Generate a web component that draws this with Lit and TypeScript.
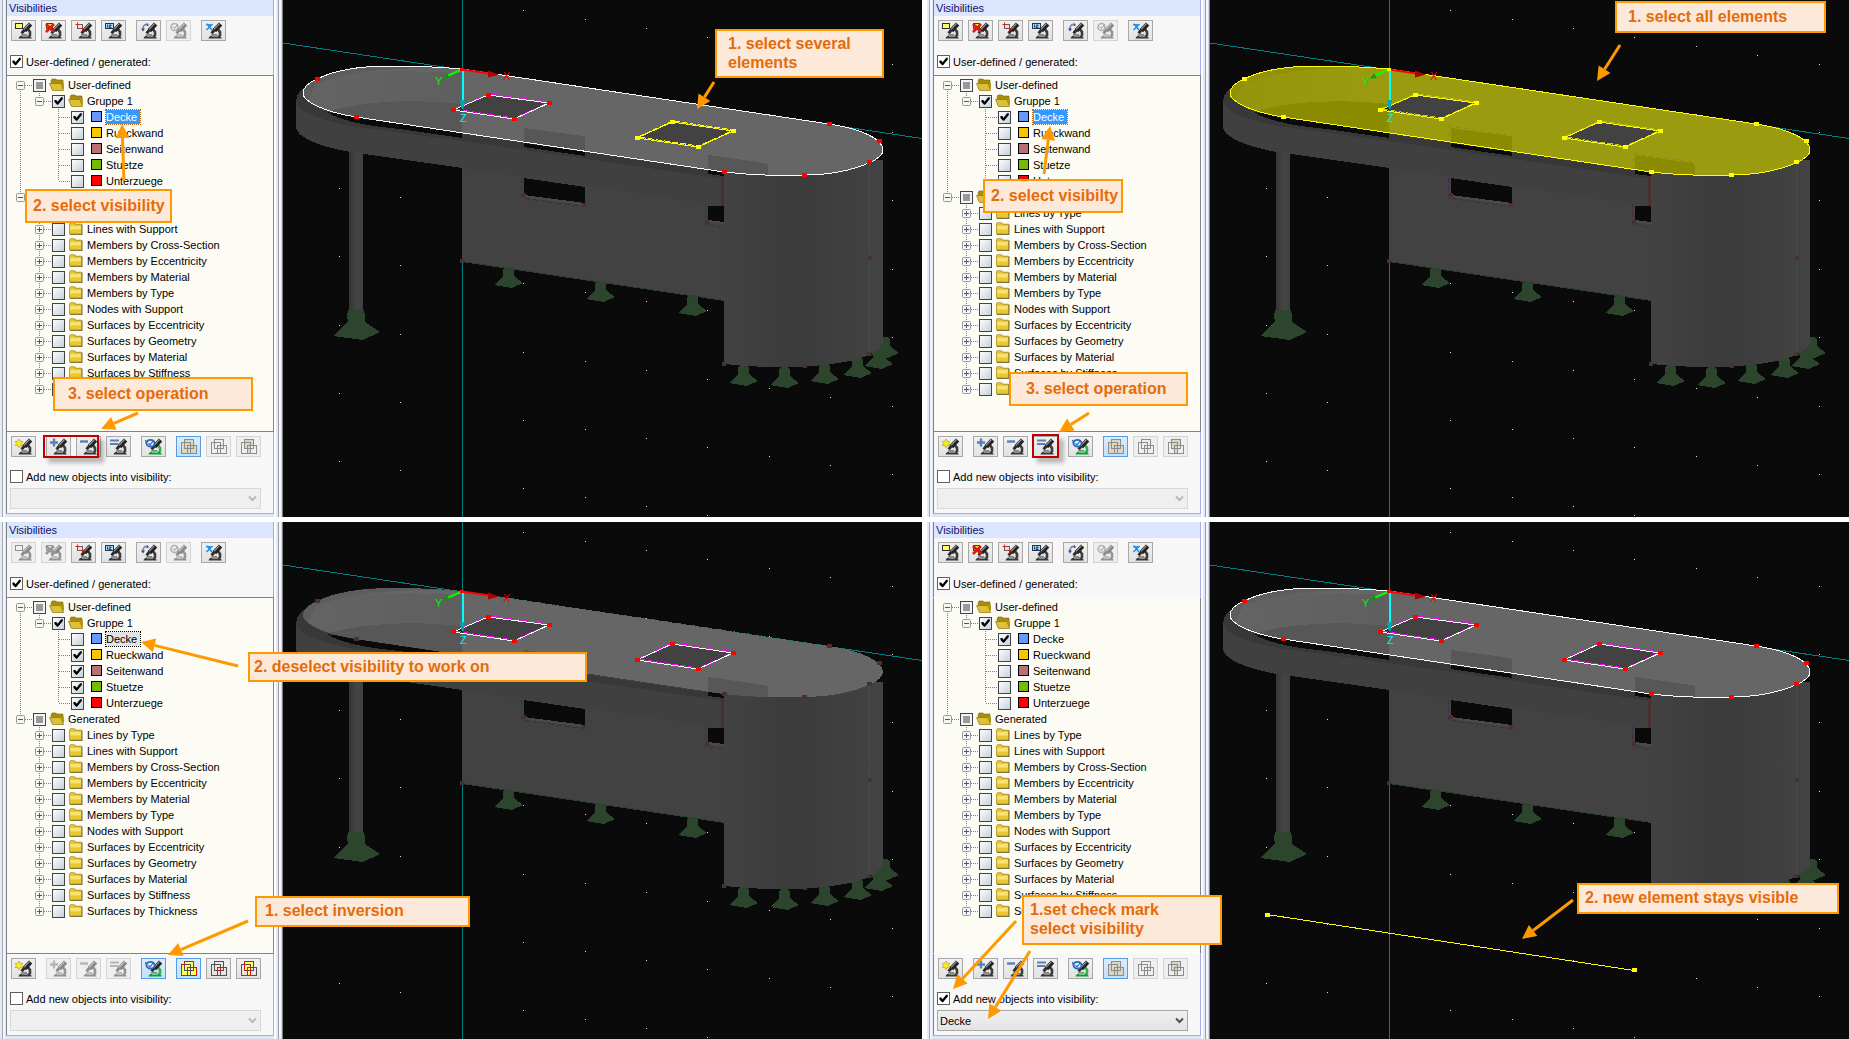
import { LitElement, html, svg, css, nothing } from "lit";
import { customElement, property } from "lit/decorators.js";
import { classMap } from "lit/directives/class-map.js";

type IconName =
  | "rect" | "delete" | "crop" | "number" | "undo" | "check" | "cross"
  | "star" | "plus" | "minus" | "equal" | "invert"
  | "union" | "intersect" | "partial";

type Tool = { icon: IconName; off?: boolean; active?: boolean };
type Callout = { x: number; y: number; w: number; h: number; pad: number; lines: string[] };
type Arrow = [number, number, number, number];
type Frame = { x: number; y: number; w: number; h: number };

interface Pane {
  top: Tool[][];
  bottom: Tool[][];
  checked: string[];
  focus?: "selected" | "outlined";
  openTree?: boolean;
  addNew?: boolean;
  target: string;
  look: "partial" | "all" | "hidden" | "line";
  callouts: Callout[];
  arrows: Arrow[];
  frame?: Frame;
}

const TITLES: Record<IconName, string> = {
  rect: "Select", delete: "Delete", crop: "Window", number: "Numbers", undo: "Undo",
  check: "Apply", cross: "Cancel", star: "New", plus: "Add", minus: "Subtract",
  equal: "Set", invert: "Invert", union: "Union", intersect: "Intersection", partial: "Difference",
};

const LAYERS: [string, string][] = [
  ["Decke", "#6699ff"],
  ["Rueckwand", "#f7c600"],
  ["Seitenwand", "#b87070"],
  ["Stuetze", "#76b900"],
  ["Unterzuege", "#ff0000"],
];

const GENERATED = [
  "Lines by Type", "Lines with Support", "Members by Cross-Section",
  "Members by Eccentricity", "Members by Material", "Members by Type",
  "Nodes with Support", "Surfaces by Eccentricity", "Surfaces by Geometry",
  "Surfaces by Material", "Surfaces by Stiffness", "Surfaces by Thickness",
];

const microscope = (green: boolean) => svg`
  <path d="M15.5 7.5l2.5 3.5v4" fill="none" stroke=${green ? "#28b848" : "#3c3c3c"} stroke-width="2.6" />
  <path d="M18.6 3L12.4 9.6" stroke="#242424" stroke-width="4.6" />
  <path d="M17.4 2.6L11.6 8.8" stroke="#a0a0a0" stroke-width="1.1" />
  <path d="M12.6 8.6L9.6 12.4" stroke="#2c2c2c" stroke-width="3" />
  <path d="M9 13.5h6" stroke="#8a8a8a" stroke-width="1.2" />
  <path d="M6.5 17.4c.5-2 2-2.8 4-3h6c1.800.2 2.800 1.200 3.200 3z" fill=${green ? "#129a34" : "#383838"} />
  <path d="M10 15.5h6" stroke=${green ? "#60d880" : "#8c8c8c"} stroke-width="1" />
`;

const badge = (name: IconName) => {
  switch (name) {
    case "rect":
      return svg`<rect x="3.5" y="2.5" width="7" height="5" fill="#ffff66" stroke="#303030" />`;
    case "delete":
      return svg`<rect x="4.5" y="2.5" width="6" height="5" fill="#ffe800" stroke="#504000" />
        <path d="M4 3l8 8M12 3l-8 8" stroke="#e01818" stroke-width="2.6" />`;
    case "crop":
      return svg`<rect x="5.5" y="3.5" width="5" height="4" fill="#e8e0e0" stroke="#606060" />
        <path d="M3.5 3.5h4M5.500 1.500v4M8.500 7.500h4M10.500 5.500v4" stroke="#e02020" />`;
    case "number":
      return svg`<rect x="3.5" y="2.5" width="8" height="5" fill="#a8dcff" stroke="#203858" />
        <path d="M5.5 3.5v3M7 4h2v1h-2v1.500h2.500" fill="none" stroke="#102840" stroke-width=".8" />`;
    case "undo":
      return svg`<path d="M6 8.500c-.5-3.500 1.500-5.500 5-5" fill="none" stroke="#6888b8" stroke-width="1.6" />
        <path d="M4 7.500l2 3 2-3zM10.500 2l1.500 2.500-2.500.5z" fill="#384c6c" />`;
    case "check":
      return svg`<circle cx="7.5" cy="6" r="3.500" fill="#f0f0f0" stroke="#5078b0" stroke-width="1.6" />
        <path d="M6 5.500l1.500 2 3-4" fill="none" stroke="#404040" />`;
    case "cross":
      return svg`<path d="M5 3l5 6M10.500 3l-6 6M4 3.500l5 .5" stroke="#2090e8" stroke-width="1.6" />`;
    case "star":
      return svg`<path d="M7 2l1.200 2.200 2.600.2-1.300 2 1.300 2.200-2.600-.1L7 10.800l-1.200-2.300-2.600.1 1.200-2.200-1.200-2 2.600-.2z" fill="#f8ec20" stroke="#a89a10" stroke-width=".6" />`;
    case "plus":
      return svg`<path d="M3 5.500h8M7 1.500v8" stroke="#5a80b8" stroke-width="2.4" />`;
    case "minus":
      return svg`<path d="M3 4.500h8" stroke="#5a80b8" stroke-width="2.4" />`;
    case "equal":
      return svg`<path d="M3 3.500h9M3 7h8" stroke="#5a80b8" stroke-width="2" />`;
    case "invert":
      return svg`<ellipse cx="8.5" cy="6.2" rx="4" ry="3.400" fill="#e4f0ff" stroke="#2c68b8" stroke-width="1.8" />
        <path d="M3.5 3l1.500 5M6.500 6.500l1.500 1.500 3-4" fill="none" stroke="#2c68b8" stroke-width="1.2" />`;
    default:
      return nothing;
  }
};

const squares = (name: IconName, live: boolean) => {
  const g = live ? "#505050" : "#8c8c8c";
  const r = live ? "#e01010" : "#8c8c8c";
  const y = live ? "#ffff60" : "#d8d6c4";
  return svg`
    ${name === "union" ? svg`<path d="M7.5 2.5h9v6h3v8h-15v-11h3z" fill=${y} />` : nothing}
    ${name === "partial" ? svg`<path d="M7.5 2.5h9v6h-3v8h-3v-5h-3z" fill=${y} />` : nothing}
    <rect x="7.5" y="2.5" width="9" height="9" fill="none" stroke=${g} />
    <rect x="4.5" y="5.5" width="9" height="11" fill="none" stroke=${g} />
    <rect x="10.5" y="8.5" width="9" height="8" fill="none" stroke=${g} />
    ${name === "union" ? svg`<path d="M7.5 2.5h9v6h3v8h-15v-11h3z" fill="none" stroke=${r} />` : nothing}
    ${name === "intersect" ? svg`<rect x="10.5" y="8.5" width="3" height="3" fill="none" stroke=${r} />` : nothing}
    ${name === "partial" ? svg`<path d="M7.5 2.5h9v6h-3v8h-3v-5h-3z" fill="none" stroke=${r} />` : nothing}
  `;
};

@customElement("tool-button")
class ToolButton extends LitElement {
  @property({ attribute: false }) tool!: Tool;

  static styles = css`
    :host { display: block; }
    button {
      display: block; width: 25px; height: 21px; padding: 0;
      border: 1px solid #a8a8a8; background: linear-gradient(#f0f0f0, #e2e2e2);
    }
    svg { display: block; width: 23px; height: 19px; }
    button:disabled { border-color: #d4d4d4; background: #efefef; }
    .mono svg { filter: grayscale(1); opacity: 0.5; }
    button.active, button.active:disabled {
      border-color: #569de5; background: linear-gradient(#daecfc, #c4e0fc);
    }
  `;

  render() {
    const { icon, off, active } = this.tool;
    const sets = icon === "union" || icon === "intersect" || icon === "partial";
    return html`<button
      class=${classMap({ active: !!active, mono: !!off && !sets })}
      ?disabled=${off}
      aria-label=${TITLES[icon]}
    >
      <svg viewBox="0 0 23 19">
        ${sets ? squares(icon, !off) : svg`${microscope(icon === "invert")}${badge(icon)}`}
      </svg>
    </button>`;
  }
}

type Guide = { up?: boolean; down?: boolean; across?: boolean; sign?: "+" | "-" };

@customElement("visibility-tree")
class VisibilityTree extends LitElement {
  @property({ attribute: false }) checked: string[] = [];
  @property() focused = "";

  static styles = css`
    :host { display: block; padding: 1px 0 0 4px; }
    ul { list-style: none; margin: 0; padding: 0 0 34px; }
    li { display: flex; align-items: center; height: 16px; }
    .guide, .toggle { flex: none; width: 19px; height: 16px; padding: 0; border: 0; background: none; }
    .guide, .guide-art { display: block; overflow: visible; }
    .guide-art { width: 19px; height: 16px; }
    label { display: flex; align-items: center; gap: 3px; margin-left: 3px; }
    input {
      appearance: none; flex: none; display: grid; place-items: center;
      width: 13px; height: 13px; margin: 0; border: 1px solid #404448;
      background: linear-gradient(135deg, #fdfdfd, #c6d0dc);
    }
    input:checked::after {
      content: ""; width: 9px; height: 9px; background: #000;
      clip-path: polygon(5% 38%, 25% 38%, 40% 58%, 80% 8%, 98% 8%, 98% 28%, 45% 92%, 35% 92%, 5% 60%);
    }
    input:indeterminate { background: #f4f4f4; }
    input:indeterminate::after { content: ""; width: 7px; height: 7px; background: #999; }
    .folder { flex: none; width: 16px; height: 14px; }
    .swatch {
      box-sizing: border-box; flex: none; width: 16px; height: 16px;
      padding: 2px 1px 3px 4px; background: #fff;
    }
    .color { display: block; box-sizing: border-box; width: 11px; height: 11px; border: 1px solid #000; }
    .name { white-space: nowrap; line-height: 14px; }
    .selected { background: #3399ff; color: #fff; outline: 1px dotted #c86400; padding-right: 3px; }
    .outlined { background: #e4e4e4; outline: 1px dotted #000; padding-right: 3px; }
  `;

  private guide(g: Guide) {
    const art = svg`
      ${g.up ? svg`<path d="M9.5 0v8" stroke="#808080" stroke-dasharray="1 1" />` : nothing}
      ${g.down ? svg`<path d="M9.5 8v8" stroke="#808080" stroke-dasharray="1 1" />` : nothing}
      ${g.across ? svg`<path d="M10 8.500h11" stroke="#808080" stroke-dasharray="1 1" />` : nothing}
      ${g.sign
        ? svg`<rect x="5.5" y="4.5" width="8" height="8" rx="1" fill="#f6f6f2" stroke="#989898" />
            <path d=${g.sign === "+" ? "M7 8.5h5M9.5 6v5" : "M7 8.5h5"} stroke="#3858a8" />`
        : nothing}`;
    return g.sign
      ? html`<button class="toggle" aria-label=${g.sign === "+" ? "Expand" : "Collapse"}>
          <svg class="guide-art" viewBox="0 0 19 16">${art}</svg>
        </button>`
      : html`<svg class="guide" viewBox="0 0 19 16">${art}</svg>`;
  }

  private folder(open: boolean) {
    return open
      ? html`<svg class="folder" viewBox="0 0 16 14">
          <path d="M2 3l1-2h4l1 1h6v9H3z" fill="#a88c10" stroke="#7c680c" stroke-width=".6" />
          <path d="M.5 5.5h11.500l2.500 7H3.500z" fill="#dcc038" stroke="#8c7410" stroke-width=".7" />
          <path d="M12 5.500l3-1v7.500z" fill="#b89818" />
        </svg>`
      : html`<svg class="folder" viewBox="0 0 16 14">
          <path d="M2 2.500l1-1.500h4l1 1.500h6.500v10.500H2z" fill="#6f6a50" />
          <path d="M1.500 2l.8-1.300h4.200l1 1.500h6v9.800h-12z" fill="#e8c830" stroke="#a08818" stroke-width=".7" />
          <path d="M2.200 4h10.600v3.500H2.200z" fill="#f6e470" />
        </svg>`;
  }

  private row(guides: Guide[], name: string, art: unknown, state: "on" | "off" | "mixed", mark = "") {
    return html`<li>
      ${guides.map((g) => this.guide(g))}
      <label>
        <input type="checkbox" .checked=${state === "on"} .indeterminate=${state === "mixed"} />
        ${art}
        <span class="name ${mark}">${name}</span>
      </label>
    </li>`;
  }

  render() {
    const last = LAYERS.length - 1;
    return html`<ul>
      ${this.row([{ down: true, across: true, sign: "-" }], "User-defined", this.folder(true), "mixed")}
      ${this.row([{ up: true, down: true }, { up: true, across: true, sign: "-" }], "Gruppe 1", this.folder(true), "on")}
      ${LAYERS.map(([name, color], i) =>
        this.row(
          [{ up: true, down: true }, {}, { up: true, down: i < last, across: true }],
          name,
          html`<span class="swatch"><span class="color" style="background:${color}"></span></span>`,
          this.checked.includes(name) ? "on" : "off",
          name === "Decke" ? this.focused : ""
        )
      )}
      ${this.row([{ up: true, across: true, sign: "-" }], "Generated", this.folder(true), "mixed")}
      ${GENERATED.map((name, i) =>
        this.row(
          [{}, { up: true, down: i < GENERATED.length - 1, across: true, sign: "+" }],
          name, this.folder(false), "off"
        )
      )}
    </ul>`;
  }
}

const SLAB =
  "M356 117C325 112 303 102 303 93C303 88 308 83 317 79C335 70 362 66 390 66C420 66 440 67 462 69" +
  "L829 124C862 129 883 139 883 150C883 155 878 159 869 163C850 171 830 175 804 175C775 176 750 175 724 172Z";
const NODES = [[317, 79], [356, 117], [829, 124], [879, 141], [869, 162], [804, 175], [724, 172]];
const HOLES = [
  [[453, 110], [488, 95], [549, 103], [514, 119]],
  [[637, 138], [672, 122], [733, 131], [698, 147]],
];
const FEET = [[0, 0], [92, 14], [184, 28], [376, 70], [370, 81], [349, 90], [316, 96], [235, 98], [276, 100]];
const DIM_NODES = [[462, 261], [724, 364], [805, 366], [869, 354], [870, 258], [524, 195], [584, 205], [707, 222]];

@customElement("model-view")
class ModelView extends LitElement {
  @property() look: Pane["look"] = "partial";

  static styles = css`
    :host { display: block; background: #0a0a0a; overflow: hidden; }
    svg { display: block; width: 100%; height: 100%; }
    text { font: 11px "Liberation Sans", Arial, sans-serif; }
  `;

  private node([x, y]: number[], fill: string) {
    return svg`<rect x=${x - 2} y=${y - 2} width="5" height="4" fill=${fill} />`;
  }

  render() {
    const all = this.look === "all";
    const dots: unknown[] = [];
    for (let c = 0; c < 10; c++)
      for (let r = -2; r < 8; r++)
        dots.push(svg`<rect x=${Math.round(339 + c * 61.4)} y=${Math.round(51 + c * 9 + r * 68.4)} width="1" height="1" />`);
    const edge = all ? "#ffff00" : "#ffffff";
    const nodeColor = all ? "#ffff00" : this.look === "hidden" ? "#4c3030" : "#ff0000";
    const top = all ? "#9b9b10" : "#666666";
    const dark = all ? "#8b8b00" : "#575757";
    return html`<svg viewBox="283 0 639 517" preserveAspectRatio="xMinYMin slice" shape-rendering="crispEdges">
      <defs>
        <linearGradient id="drum" x1="0" x2="1">
          <stop offset="0" stop-color="#424242" /><stop offset=".45" stop-color="#3b3b3b" />
          <stop offset="1" stop-color="#434343" />
        </linearGradient>
        <linearGradient id="post" x1="0" x2="1">
          <stop offset="0" stop-color="#363636" /><stop offset=".6" stop-color="#454545" />
          <stop offset="1" stop-color="#404040" />
        </linearGradient>
        <linearGradient id="inner" x1="0" x2="1">
          <stop offset="0" stop-color=${all ? "#95950d" : "#646464"} /><stop offset="1" stop-color=${all ? "#9b9b10" : "#5f5f5f"} />
        </linearGradient>
        <clipPath id="slab"><path d=${SLAB} /></clipPath>
      </defs>

      <g fill="#d8e4dc">${dots}</g>
      <path d="M283 43L922 138.5M462.5 0V517" stroke="#008080" fill="none" />

      <g fill="#2d452d">
        <path d="M348 310h16l1 6v6l15 10-17 8-30-4 15-14-1-6z" />
        ${FEET.map(([x, y]) => svg`<path transform="translate(${x} ${y})" d="M503 270l2-3h7l2 3v6l9 7-11 5-18-3 9-8z" />`)}
      </g>
      <rect x="349" y="140" width="14" height="170" fill="url(#post)" />

      <path d="M462 120L724 160V300L462 261.5Z" fill="#424242" />
      <path d="M462 261.5L724 300.5" stroke="#2a422a" />
      <path d="M524 178L585 187V203L524 195ZM708 206H724V223L708 222Z" fill="#0a0a0a" />
      <path d="M524 195l61 8v2l-61-8zM708 220l16 2v2l-16-2z" fill="#4a4a4a" />
      <path d="M521.5 178v20l63 9M705.5 204v20l18 4" fill="none" stroke="#432a48" stroke-dasharray="5 3" />
      <path d="M724 160H883V343C880 350 868 357 850 361C815 368 770 369 724 364Z" fill="url(#drum)" />
      <path d="M869.5 163V354" stroke="#4b4b4b" />

      <path d="M296 101C296 92 305 86 317 80L356 117L724 172V206L462 168L350 152C316 146 296 136 296 127Z" fill="#404040" />
      <path d="M296 101C298 92 302 88 304 88L303 95C309 107 330 114 356 118L724 173V179L462 141L350 126C325 121 297 113 296 101Z" fill="#383838" />
      <path d="M327 112L462 133V138L400 129Q345 124 327 112ZM524 143L585 152V156L524 147ZM708 170L724 172V176L708 174Z" fill="#0a0a0a" />
      <rect x="721" y="177" width="3" height="29" fill="#492e2e" />

      <path d=${SLAB} fill=${top} />
      <g clip-path="url(#slab)">
        <path d="M300 60H462V69Q400 66 360 73Q318 82 312 98L300 100Z" fill=${dark} opacity=".6" />
        <path d="M316 84Q350 70 400 71L462 73V106Q380 96 326 112L308 100Z" fill="url(#inner)" />
        <path d="M326 112Q380 96 462 104V134L350 118Z" fill=${dark} />
        <path d="M524 128L583 136Q585 136 585 139V154L524 144ZM708 155L765 163Q768 164 768 167V178H708Z" fill=${dark} />
        <path d="M522.5 144V126.5L585 135M706.5 170V153.5L766 162.5" fill="none" stroke="#806060" stroke-dasharray="4 4" opacity=".35" />
      </g>

      ${this.look === "hidden"
        ? svg`<path d="M470 70.5L829 124" stroke="#2a7070" stroke-dasharray="5 9" />`
        : svg`<path d=${SLAB} fill="none" stroke=${edge} stroke-width="1" />`}

      ${HOLES.map((h, i) => {
        const yellow = all || (this.look === "partial" && i === 1);
        const pts = h.map((p) => p.join(",")).join(" ");
        return svg`
          <polygon points=${pts} fill="#424242" />
          ${i === 0 ? svg`<path d="M453 110L462 106V111Z" fill="#0a0a0a" />` : nothing}
          <polygon transform="translate(1 -1)" points=${pts} fill="none" stroke=${yellow ? (all ? "#c8c800" : "#ffff00") : "#ff00ff"} stroke-dasharray="6 2" />
          <polygon points=${pts} fill="none" stroke=${yellow ? "#ffff00" : "#ffffff"} />
          ${h.map((p) => this.node(p, yellow ? "#ffff00" : "#ff0000"))}`;
      })}
      ${NODES.map((p) => this.node(p, nodeColor))}
      ${DIM_NODES.map((p) => svg`<rect x=${p[0] - 2} y=${p[1] - 2} width="4" height="4" fill="#4c3030" />`)}

      <g shape-rendering="auto">
        <path d="M462 69.5L490 73.5" stroke="#ff0000" stroke-width="2" />
        <path d="M488 70.5l11 4-11 3z" fill="#b00000" />
        <path d="M462 69.5L447 76" stroke="#00ff00" stroke-width="2" />
        <path d="M443 78.5l4-5 3 4.500z" fill="#00a000" />
        <path d="M463 70V102" stroke="#00ffff" stroke-width="2" />
        <path d="M460 100h5l-1.500 9h-2z" fill="#00a8b0" />
        <rect x="460" y="68" width="4" height="3" fill=${all ? "#ffff00" : "#ff0000"} />
        <text x="503" y="80" fill="#f00000">X</text>
        <text x="435" y="85" fill="#00f000">Y</text>
        <text x="460" y="122" fill="#00f0f0">Z</text>
      </g>

      ${this.look === "line"
        ? svg`<path d="M340 392.5L707 448.5" stroke="#ffff00" />
            ${this.node([340, 393], "#ffff00")}${this.node([707, 448], "#ffff00")}`
        : nothing}
    </svg>`;
  }
}

@customElement("guide-pane")
class GuidePane extends LitElement {
  @property({ attribute: false }) pane!: Pane;

  static styles = css`
    :host {
      display: flex; position: relative; background: #0a0a0a;
      font: 11px "Liberation Sans", Arial, sans-serif; color: #000;
    }
    .dock {
      box-sizing: border-box; flex: none; width: 283px; padding: 0 9px 3px 6px;
      background: linear-gradient(to right,
        #e6eaf6 2px, #a4a8b4 2px 3px, #f4f6fc 3px 5px, #dfe5f2 5px 274px,
        #fff 274px 276px, #e2e8f6 276px 278px, #9a9eaa 278px 279px,
        #f4f6fc 279px 281px, #d4daea 281px 282px, #808080 282px);
    }
    .panel {
      display: flex; flex-direction: column; background: #f7f7f7;
      border: solid #a8a8ea; border-width: 0 1px 1px 0; box-shadow: inset 1px 0 #808488;
    }
    h2 {
      margin: 0 0 0 1px; padding: 0 2px; height: 16px; line-height: 16px;
      font-size: 11px; font-weight: normal; color: #10106c; background: #dbe6fe;
    }
    .tools { display: flex; gap: 10px; padding: 4px 5px; }
    .group { display: flex; gap: 5px; }
    .option { display: flex; align-items: center; gap: 3px; padding: 10px 4px 7px; }
    .option.add { padding: 9px 4px 5px; }
    .option input {
      appearance: none; display: grid; place-items: center; width: 13px; height: 13px;
      margin: 0; border: 1px solid #606060; background: #fff;
    }
    .option input:checked::after {
      content: ""; width: 9px; height: 9px; background: #000;
      clip-path: polygon(5% 38%, 25% 38%, 40% 58%, 80% 8%, 98% 8%, 98% 28%, 45% 92%, 35% 92%, 5% 60%);
    }
    visibility-tree {
      margin-right: -1px; border: 1px solid #808488; background: #fcfcf4;
    }
    .bare { border-color: #fcfcf4 #808488; }
    .pick { position: relative; margin: 0 12px 4px 4px; }
    select {
      appearance: none; display: block; width: 100%; height: 21px; margin: 0; padding: 0 2px;
      border: 1px solid #a8a8a8; border-radius: 0; font: inherit; color: #000;
      background: linear-gradient(#f0f0f0, #e4e4e4);
    }
    select:disabled { border-color: #d8d8d8; background: #efefef; opacity: 1; }
    .chevron { position: absolute; right: 4px; top: 7px; width: 9px; height: 7px; pointer-events: none; color: #505050; }
    select:disabled + .chevron { color: #b8b8b8; }
    model-view { flex: 1; min-width: 0; contain: size; }
    .arrows { position: absolute; left: 0; top: 0; width: 922px; height: 517px; pointer-events: none; }
    .callout {
      box-sizing: border-box; position: absolute; display: flex; flex-direction: column; justify-content: center;
      padding-bottom: 2px; border: 2px solid #ff9900; background: #fde9d9; color: #e46c0a;
      font-size: 16px; font-weight: bold; line-height: 19px; white-space: nowrap;
    }
    .frame {
      box-sizing: border-box; position: absolute; border: 2px solid #c00000;
      box-shadow: 5px 5px 4px rgba(0, 0, 0, 0.25); pointer-events: none;
    }
  `;

  private arrow([x1, y1, x2, y2]: Arrow) {
    const len = Math.hypot(x2 - x1, y2 - y1);
    const ux = (x2 - x1) / len, uy = (y2 - y1) / len;
    const bx = x2 - ux * 14, by = y2 - uy * 14;
    return svg`
      <path d="M${x1} ${y1}L${bx} ${by}" stroke="#ff9900" stroke-width="3" />
      <polygon points="${x2},${y2} ${bx - uy * 7},${by + ux * 7} ${bx + uy * 7},${by - ux * 7}" fill="#ff9900" />`;
  }

  private tools(groups: Tool[][]) {
    return html`<div class="tools">
      ${groups.map((g) => html`<div class="group">${g.map((t) => html`<tool-button .tool=${t}></tool-button>`)}</div>`)}
    </div>`;
  }

  render() {
    const p = this.pane;
    return html`
      <section class="dock">
        <div class="panel">
          <h2>Visibilities</h2>
          ${this.tools(p.top)}
          <label class="option"><input type="checkbox" checked />User-defined / generated:</label>
          <visibility-tree
            class=${p.openTree ? "bare" : ""}
            .checked=${p.checked}
            .focused=${p.focus ?? ""}
          ></visibility-tree>
          ${this.tools(p.bottom)}
          <label class="option add"><input type="checkbox" .checked=${!!p.addNew} /><span id="add">Add new objects into visibility:</span></label>
          <div class="pick">
            <select aria-labelledby="add" ?disabled=${!p.addNew}>
              <option>${p.target}</option>
            </select>
            <svg class="chevron" viewBox="0 0 9 7"><path d="M1 1.5l3.5 3.5 3.5-3.5" fill="none" stroke="currentColor" stroke-width="2" /></svg>
          </div>
        </div>
      </section>
      <model-view .look=${p.look}></model-view>
      ${p.frame
        ? html`<div class="frame" style="left:${p.frame.x}px;top:${p.frame.y}px;width:${p.frame.w}px;height:${p.frame.h}px"></div>`
        : nothing}
      ${p.callouts.map(
        (c) => html`<div class="callout" style="left:${c.x}px;top:${c.y}px;width:${c.w}px;height:${c.h}px;padding-left:${c.pad}px">
          ${c.lines.map((l) => html`<span>${l}</span>`)}
        </div>`
      )}
      <svg class="arrows" viewBox="0 0 922 517">${p.arrows.map((a) => this.arrow(a))}</svg>
    `;
  }
}

const topTools = (first: boolean): Tool[][] => [
  [{ icon: "rect", off: !first }, { icon: "delete", off: !first }, { icon: "crop" }, { icon: "number" }],
  [{ icon: "undo" }, { icon: "check", off: true }],
  [{ icon: "cross" }],
];
const bottomTools = (inverted: boolean): Tool[][] => [
  [{ icon: "star" }],
  [{ icon: "plus", off: inverted }, { icon: "minus", off: inverted }, { icon: "equal", off: inverted }],
  [{ icon: "invert", active: inverted }],
  [{ icon: "union", off: !inverted, active: true }, { icon: "intersect", off: !inverted }, { icon: "partial", off: !inverted }],
];

const PANES: Pane[] = [
  {
    top: topTools(true), bottom: bottomTools(false), checked: ["Decke"], focus: "selected",
    target: "", look: "partial",
    frame: { x: 43, y: 435, w: 56, h: 23 },
    callouts: [
      { x: 25, y: 189, w: 147, h: 34, pad: 6, lines: ["2. select visibility"] },
      { x: 53, y: 377, w: 200, h: 34, pad: 13, lines: ["3. select operation"] },
      { x: 715, y: 29, w: 169, h: 49, pad: 11, lines: ["1. select several", "elements"] },
    ],
    arrows: [[124, 181, 122, 124], [138, 413, 101, 429], [714, 82, 697, 109]],
  },
  {
    top: topTools(true), bottom: bottomTools(false), checked: ["Decke"], focus: "selected",
    target: "", look: "all",
    frame: { x: 105, y: 434, w: 27, h: 24 },
    callouts: [
      { x: 56, y: 179, w: 140, h: 34, pad: 6, lines: ["2. select visibilty"] },
      { x: 82, y: 372, w: 179, h: 34, pad: 15, lines: ["3. select operation"] },
      { x: 688, y: 1, w: 211, h: 32, pad: 11, lines: ["1. select all elements"] },
    ],
    arrows: [[117, 174, 123, 126], [162, 413, 132, 432], [693, 45, 670, 81]],
  },
  {
    top: topTools(false), bottom: bottomTools(true),
    checked: ["Rueckwand", "Seitenwand", "Stuetze", "Unterzuege"], focus: "outlined",
    target: "", look: "hidden",
    callouts: [
      { x: 248, y: 130, w: 339, h: 30, pad: 4, lines: ["2. deselect visibility to work on"] },
      { x: 255, y: 374, w: 215, h: 31, pad: 8, lines: ["1. select inversion"] },
    ],
    arrows: [[238, 144, 141, 120], [248, 399, 168, 433]],
  },
  {
    top: topTools(true), bottom: bottomTools(false), checked: ["Decke"], openTree: true,
    addNew: true, target: "Decke", look: "line",
    callouts: [
      { x: 95, y: 373, w: 200, h: 50, pad: 6, lines: ["1.set check mark", "select visibility"] },
      { x: 650, y: 361, w: 262, h: 31, pad: 6, lines: ["2. new element stays visible"] },
    ],
    arrows: [[89, 399, 26, 467], [103, 429, 61, 497], [646, 378, 595, 417]],
  },
];

@customElement("app-root")
class AppRoot extends LitElement {
  static styles = css`
    :host { display: block; background: #fff; }
    main { display: grid; grid-template-columns: 1fr 1fr; gap: 5px; }
  `;

  render() {
    return html`<main>${PANES.map((p) => html`<guide-pane .pane=${p}></guide-pane>`)}</main>`;
  }
}
